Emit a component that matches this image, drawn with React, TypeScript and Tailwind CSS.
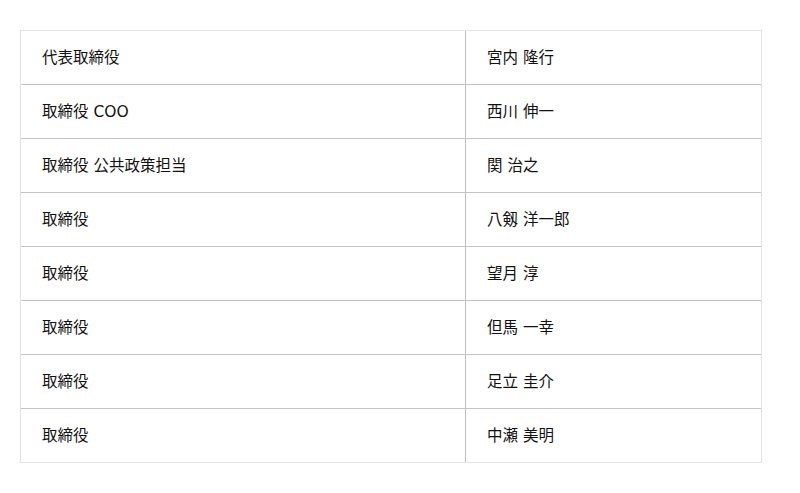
import React from "react";

const officers = [
    { title: "代表取締役", name: "宮内 隆行" },
    { title: "取締役 COO", name: "西川 伸一" },
    { title: "取締役 公共政策担当", name: "関 治之" },
    { title: "取締役", name: "八剱 洋一郎" },
    { title: "取締役", name: "望月 淳" },
    { title: "取締役", name: "但馬 一幸" },
    { title: "取締役", name: "足立 圭介" },
    { title: "取締役", name: "中瀬 美明" },
];

export default function App() {
    return (
        <div
            className="w-[800px] h-[493px] bg-white pt-[30px] pl-[20px] text-[#111]"
            style={{ fontFamily: '"DejaVu Sans", "Noto Sans CJK JP", sans-serif' }}
        >
            <div className="w-[742px] border border-[#e2e2e2]">
                {officers.map((o, i) => (
                    <div
                        key={i}
                        className={
                            i === 0
                                ? "flex h-[53px]"
                                : "flex h-[54px] border-t border-[#c4c4c4]"
                        }
                    >
                        <div className="w-[445px] shrink-0 flex items-center pl-[21px] pt-[2px] border-r border-[#bdbdbd] text-[15.5px]">
                            {o.title}
                        </div>
                        <div className="flex-1 flex items-center pl-[21px] pt-[2px] text-[15.5px]">
                            {o.name}
                        </div>
                    </div>
                ))}
            </div>
        </div>
    );
}
